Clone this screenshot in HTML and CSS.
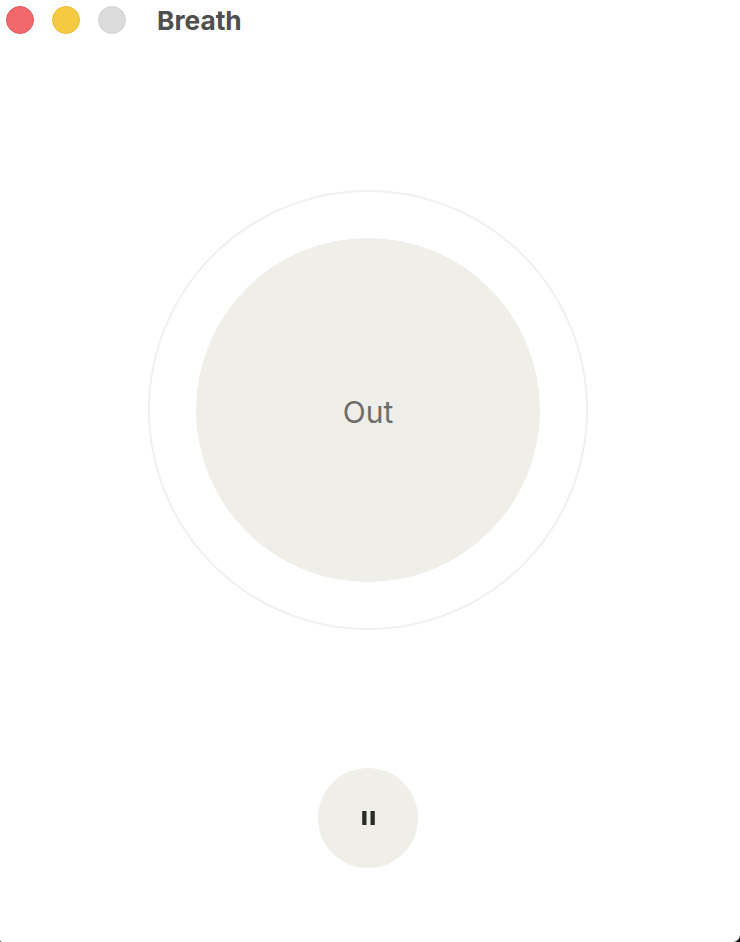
FILE: index.html
```html
<!DOCTYPE html>
<html lang="en">
<head>
    <meta charset="UTF-8">
    <meta name="viewport" content="width=device-width, initial-scale=1.0">
    <title>Breath</title>
    <link rel="stylesheet" href="styles.css">
</head>
<body>
    <div class="window">
        <header class="titlebar">
            <div class="lights">
                <span class="light light-close"></span>
                <span class="light light-min"></span>
                <span class="light light-max"></span>
            </div>
            <h1>Breath</h1>
        </header>
        <main class="content">
            <div class="ring">
                <div class="circle">Out</div>
            </div>
            <button type="button" class="btn-pause" aria-label="Pause">
                <svg width="13" height="14" viewBox="0 0 13 14">
                    <rect x="0.2" y="0" width="4.3" height="14" fill="#2b2b29"></rect>
                    <rect x="8.5" y="0" width="4.3" height="14" fill="#2b2b29"></rect>
                </svg>
            </button>
        </main>
    </div>
</body>
</html>
```

FILE: styles.css
```css
html, body {
    height: 100%;
}
body {
    margin: 0;
    background-color: #000;
    font-family: Inter, "Liberation Sans", sans-serif;
    overflow: hidden;
}
.window {
    height: 942px;
    box-sizing: border-box;
    background-color: #fff;
    border-bottom-left-radius: 2px;
    border-bottom-right-radius: 7px;
    overflow: hidden;
}
.titlebar {
    display: flex;
    align-items: center;
    height: 40px;
    padding-left: 6px;
}
.lights {
    display: flex;
    gap: 18px;
}
.light {
    width: 28px;
    height: 28px;
    box-sizing: border-box;
    border-radius: 50%;
    border: 1px solid;
}
.light-close {
    background-color: #f3686c;
    border-color: #e9555a;
}
.light-min {
    background-color: #f5ca43;
    border-color: #eebd2e;
}
.light-max {
    background-color: #dcdcdc;
    border-color: #d2d2d2;
}
h1 {
    margin: 1px 0 0 31px;
    font-size: 26.3px;
    font-weight: 700;
    color: #4f4f4f;
}
.content {
    display: flex;
    flex-direction: column;
    align-items: center;
    padding-top: 150px;
    padding-right: 4px;
}
.ring {
    width: 440px;
    height: 440px;
    box-sizing: border-box;
    border: 2px solid #f0f0ee;
    border-radius: 50%;
    display: flex;
    align-items: center;
    justify-content: center;
}
.circle {
    width: 344px;
    height: 344px;
    box-sizing: border-box;
    padding-top: 3px;
    border-radius: 50%;
    background-color: #efeee9;
    color: #6e6d69;
    font-size: 30px;
    display: flex;
    align-items: center;
    justify-content: center;
}
.btn-pause {
    width: 100px;
    height: 100px;
    margin-top: 138px;
    padding: 0;
    border: none;
    border-radius: 50%;
    background-color: #efeee9;
    cursor: pointer;
    display: flex;
    align-items: center;
    justify-content: center;
}
```
